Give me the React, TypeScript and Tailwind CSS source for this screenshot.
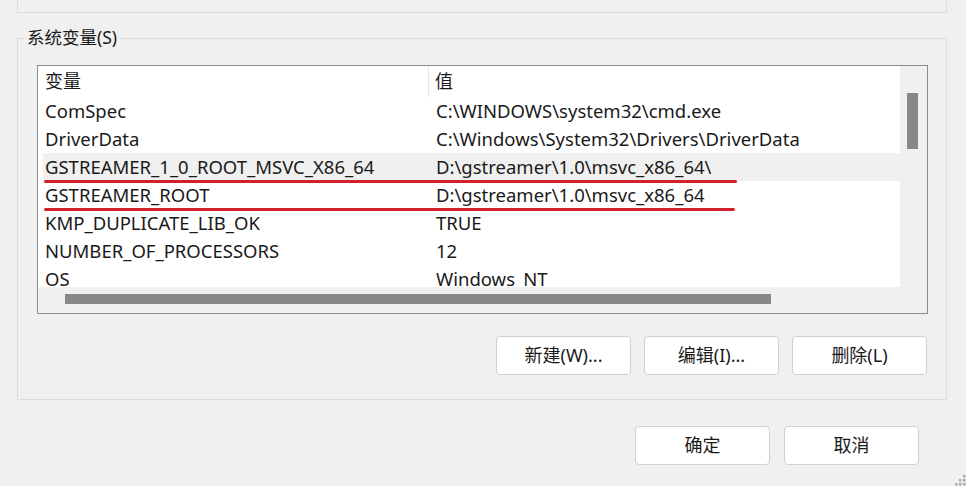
import React from 'react';

const rows = [
  { name: 'ComSpec', value: 'C:\\WINDOWS\\system32\\cmd.exe' },
  { name: 'DriverData', value: 'C:\\Windows\\System32\\Drivers\\DriverData' },
  { name: 'GSTREAMER_1_0_ROOT_MSVC_X86_64', value: 'D:\\gstreamer\\1.0\\msvc_x86_64\\', selected: true, mark: 736 },
  { name: 'GSTREAMER_ROOT', value: 'D:\\gstreamer\\1.0\\msvc_x86_64', mark: 734 },
  { name: 'KMP_DUPLICATE_LIB_OK', value: 'TRUE' },
  { name: 'NUMBER_OF_PROCESSORS', value: '12' },
  { name: 'OS', value: 'Windows_NT' },
];

const font = { fontFamily: '"Noto Sans", "Noto Sans CJK SC", sans-serif' };

function WinButton({ label }: { label: string }) {
  return (
    <button className="w-[135px] h-[39px] bg-white border border-[#d0d0d0] rounded-[4px] text-[18px] text-[#1a1a1a] flex items-center justify-center">
      {label}
    </button>
  );
}

export default function App() {
  return (
    <div className="w-[966px] h-[486px] bg-[#f0f0f0] overflow-hidden relative text-[#1a1a1a]" style={font}>
      {/* previous group box tail */}
      <div className="ml-[17px] w-[930px] h-[13px] border-l border-r border-b border-[#dcdcdc]" />

      {/* system variables group */}
      <div className="relative ml-[17px] mt-[25px] w-[930px] h-[362px] border border-[#dcdcdc]">
        <div className="absolute left-[6px] top-[-14px] px-[3px] bg-[#f0f0f0] text-[17.5px] leading-[24px]">系统变量(S)</div>

        {/* list view */}
        <div className="mt-[26px] ml-[19px] w-[891px] h-[249px] border border-[#8c8c8c] bg-[#f0f0f0] flex flex-col">
          <div className="flex flex-1 min-h-0">
            <div className="w-[862px] bg-white flex flex-col overflow-hidden">
              <div className="h-[31px] shrink-0 flex text-[18px] leading-[31px]">
                <div className="w-[391px] pl-[7px] border-r border-[#e5e5e5]">变量</div>
                <div className="pl-[6px]">值</div>
              </div>
              {rows.map((r) => (
                <div key={r.name} className="relative h-[28px] shrink-0">
                  <div className={`ml-[5px] h-[28px] flex text-[18.5px] leading-[28px] whitespace-nowrap overflow-hidden ${r.selected ? 'bg-[#f0f0f0]' : ''}`}>
                    <div className="w-[393px] pl-[2px]">{r.name}</div>
                    <div>{r.value}</div>
                  </div>
                  {r.mark && (
                    <div
                      className="absolute left-[6px] bottom-[-2px] h-[3.5px] rounded-full bg-[#d3212c]"
                      style={{ width: r.mark - 43 }}
                    />
                  )}
                </div>
              ))}
            </div>
            {/* vertical scrollbar */}
            <div className="flex-1 relative">
              <div className="absolute left-[7px] top-[27px] w-[11px] h-[56px] bg-[#888888]" />
            </div>
          </div>
          {/* horizontal scrollbar */}
          <div className="h-[26px] shrink-0 relative">
            <div className="absolute left-[27px] top-[7px] w-[706px] h-[10px] bg-[#888888]" />
          </div>
        </div>

        <div className="flex justify-end gap-[13px] mr-[19px] mt-[22px]">
          <WinButton label="新建(W)..." />
          <WinButton label="编辑(I)..." />
          <WinButton label="删除(L)" />
        </div>
      </div>

      <div className="flex justify-end gap-[14px] mr-[47px] mt-[26px]">
        <WinButton label="确定" />
        <WinButton label="取消" />
      </div>

      {/* size grip */}
      <svg className="absolute right-0 bottom-0" width="12" height="12" viewBox="0 0 12 12">
        {[
          [9, 1], [9, 5], [5, 5], [9, 9], [5, 9], [1, 9],
        ].map(([x, y]) => (
          <rect key={`${x}-${y}`} x={x} y={y} width="2.5" height="2.5" fill="#a8a8a8" />
        ))}
      </svg>
    </div>
  );
}
